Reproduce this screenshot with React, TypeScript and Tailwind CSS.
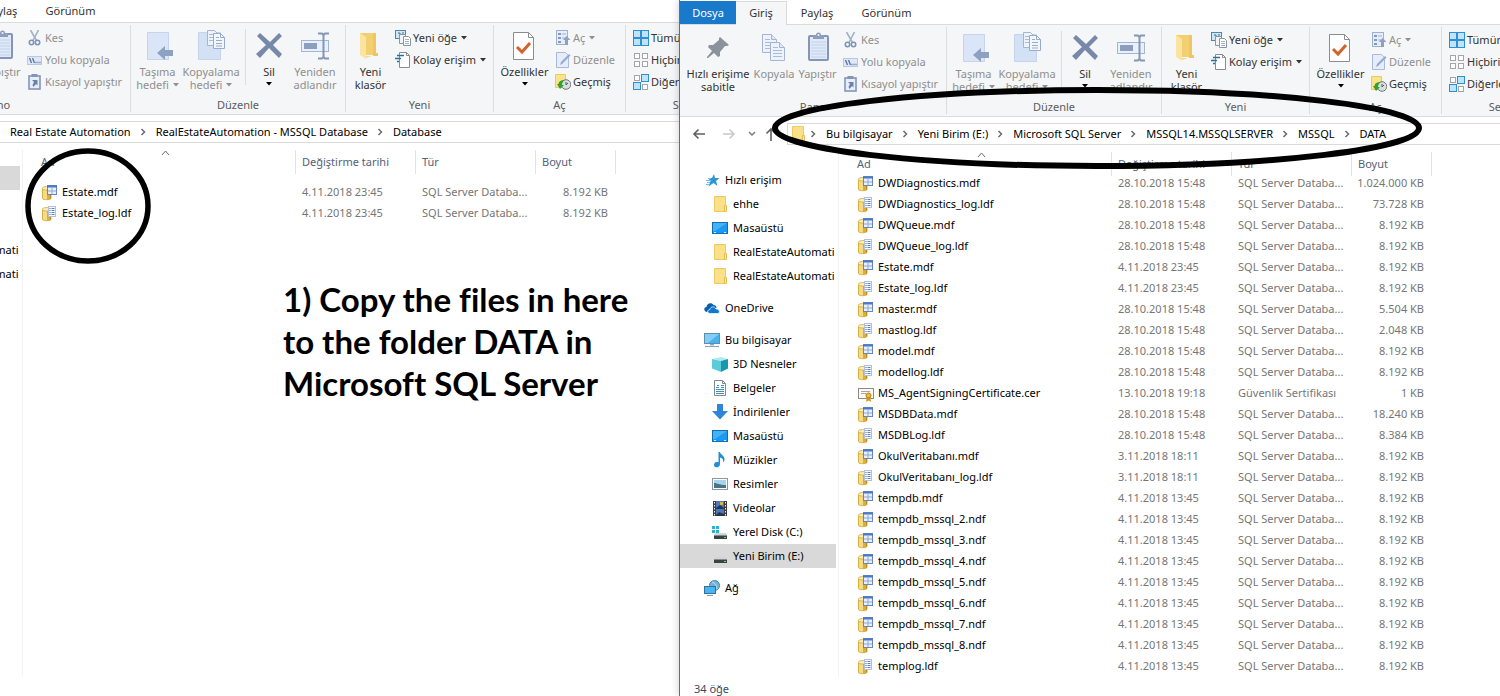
import React from "react";

type IconProps = { className?: string };

/* ---------- ribbon icons, large ---------- */

const PinIcon = () => (
  <svg width="32" height="32" viewBox="0 0 32 32">
    <path d="M18 6l9 8-2 1-2 0-5 6 0 4-2 1-4-4-6 5-1 0 0-1 5-6-4-4 1-2 4 0 6-5 0-2z" fill="#8a939c" />
  </svg>
);

const Sheet = ({ x, y }: { x: number; y: number }) => (
  <g transform={`translate(${x} ${y})`}>
    <path d="M.5.5h9l5 5v13H.5z" fill="#edf3fc" stroke="#a3b5d3" />
    <path d="M9.500.5v5h5" fill="#dbe6f6" stroke="#a3b5d3" />
    <path d="M3 5.500h5M3 8.500h9M3 11.500h9M3 14.500h9" stroke="#a9badb" />
  </g>
);

const CopyIcon = () => (
  <svg width="32" height="32" viewBox="0 0 32 32">
    <Sheet x={4} y={3} />
    <Sheet x={12} y={11} />
  </svg>
);

const PasteIcon = () => (
  <svg width="32" height="32" viewBox="0 0 32 32">
    <rect x="7" y="5" width="19" height="24" rx="1" fill="#dfe9f8" stroke="#8495b8" strokeWidth="2" />
    <path d="M9 11h15M9 14h15M9 17h15M9 20h15M9 23h15M9 26h15" stroke="#c3d1ea" />
    <path d="M11 4h3a2.500 2.500 0 0 1 5 0h3v4H11z" fill="#8c9dbd" />
    <circle cx="16.500" cy="4" r="1" fill="#f5f6f7" />
  </svg>
);

const MoveToIcon = () => (
  <svg width="32" height="32" viewBox="0 0 32 32">
    <path d="M5.500 3.500h21v27h-21z" fill="#dae6f7" stroke="#c5d4ec" />
    <path d="M15 24l8-7v4h8v6h-8v4z" fill="#8fa1c0" />
  </svg>
);

const CopyToIcon = () => (
  <svg width="32" height="32" viewBox="0 0 32 32">
    <path d="M3.500 3.500h22v27h-22z" fill="#d3e1f5" stroke="#c5d4ec" />
    <path d="M12.500 1.500h7l3 3v12h-10z" fill="#edf3fc" stroke="#a3b5d3" />
    <path d="M14 5.500h5M14 8.500h4M14 11.500h4" stroke="#a9badb" />
    <path d="M18.500 4.500h7l4 4v11h-11z" fill="#f2f6fd" stroke="#98abcd" />
    <path d="M25.500 4.500v4h4M21 8.500h3M21 11.500h6M21 14.500h6M21 17h6" fill="none" stroke="#98abcd" />
  </svg>
);

const DeleteIcon = () => (
  <svg width="32" height="32" viewBox="0 0 32 32">
    <path d="M4 7l3-3 10 9 9-9 3 3-9 9 9 9-3 4-10-10-9 10-4-4 10-9z" fill="#7788aa" />
  </svg>
);

const RenameIcon = () => (
  <svg width="32" height="32" viewBox="0 0 32 32">
    <rect x="2.500" y="11.500" width="27" height="11" fill="#e8f0fb" stroke="#a3b5d3" />
    <rect x="5" y="14" width="13" height="6" fill="#8c9dbd" />
    <path d="M19 4.500h4l1.500 1.500 1.500-1.500h4M24.500 6v22M19 29.500h4l1.500-1.500 1.500 1.500h4" fill="none" stroke="#8495b8" strokeWidth="2" />
  </svg>
);

const NewFolderIcon = () => (
  <svg width="32" height="32" viewBox="0 0 32 32">
    <path d="M5 4h16v22H5z" fill="#f3cf70" />
    <path d="M18 4h3v20h2v3h-5z" fill="#f0c661" />
    <path d="M5 4l6 4v22l-6-4z" fill="#fbe3a0" />
    <path d="M11 29l6-2h-6z" fill="#f7d98a" />
  </svg>
);

const PropertiesIcon = () => (
  <svg width="32" height="32" viewBox="0 0 32 32">
    <path d="M4.500 3.500h15l5 5v22h-20z" fill="#fff" stroke="#8c8c8c" />
    <path d="M19.500 3.500v5h5" fill="none" stroke="#8c8c8c" />
    <path d="M8 18l5 5 8-9" fill="none" stroke="#d4622b" strokeWidth="3" />
  </svg>
);

/* ---------- ribbon icons, small ---------- */

const CutIcon = () => (
  <svg width="16" height="16" viewBox="0 0 16 16">
    <path d="M3.500 0l6 10.500M11.500 0L6 10.500" stroke="#a3b0c6" strokeWidth="1.600" />
    <circle cx="4.500" cy="12.500" r="2.200" fill="none" stroke="#7e93bb" strokeWidth="1.600" />
    <circle cx="10.500" cy="12.500" r="2.200" fill="none" stroke="#7e93bb" strokeWidth="1.600" />
  </svg>
);

const PathIcon = () => (
  <svg width="16" height="16" viewBox="0 0 16 16">
    <rect x=".5" y="4.500" width="14" height="8" fill="#dde8f8" stroke="#b9c9e4" />
    <path d="M2.500 6l2 5M5.500 6l2 5M8.500 10.500h1M10.500 10.500h1M12.500 10.500h1" stroke="#5c719c" strokeWidth="1.300" />
  </svg>
);

const PasteShortcutIcon = () => (
  <svg width="16" height="16" viewBox="0 0 16 16">
    <rect x="2" y="2" width="11" height="13" fill="#e6eefa" stroke="#8495b8" strokeWidth="1.600" />
    <path d="M4.500 0h6v3h-6z" fill="#8495b8" />
    <path d="M5 6h5.500v5.500L9 10l-2.500 3-1-2L7 8z" fill="#6c80aa" />
  </svg>
);

const NewItemIcon = () => (
  <svg width="16" height="16" viewBox="0 0 16 16">
    <rect x=".5" y=".5" width="10" height="8" fill="#cfe6f3" stroke="#4c88a8" />
    <path d="M3 3h2v2M7 3h2" stroke="#3b7594" fill="none" />
    <path d="M4.500 4.500h6v9h-6z" fill="#eef4f8" stroke="#8b969e" />
    <path d="M8.500 6.500h5l2 2v7h-7z" fill="#fff" stroke="#8b969e" />
    <path d="M10 9.500h4M10 11.500h4M10 13.500h4" stroke="#9fb5c4" />
  </svg>
);

const EasyAccessIcon = () => (
  <svg width="16" height="16" viewBox="0 0 16 16">
    <path d="M4.500.5h7l3 3v12h-10z" fill="#fff" stroke="#8b8b8b" />
    <path d="M11.500.5v3h3" fill="none" stroke="#8b8b8b" />
    <path d="M2 3.500h7M0 6.500h6M2 9.500h2" stroke="#2f6f9c" strokeWidth="1.500" />
  </svg>
);

const OpenIcon = () => (
  <svg width="16" height="16" viewBox="0 0 16 16">
    <rect x="1.500" y=".5" width="11" height="14" fill="#e4edf9" stroke="#9fb1d1" />
    <path d="M3 3h3v2H3zM3 7h3v2H3zM3 11h3v2H3z" fill="#8598bd" />
    <path d="M7 4h4M7 8h3" stroke="#9fb1d1" />
    <path d="M11.500 6l4 4h-2.500v5h-3v-5H8z" fill="#8fa1c0" />
  </svg>
);

const EditIcon = () => (
  <svg width="16" height="16" viewBox="0 0 16 16">
    <path d="M1.500.5h9l3 3v12h-12z" fill="#e4edf9" stroke="#a9badb" />
    <path d="M5 13l1-3 8-8 1.500 1.500-8 8z" fill="#93a9cf" />
  </svg>
);

const HistoryIcon = () => (
  <svg width="16" height="16" viewBox="0 0 16 16">
    <path d="M.5.5h10v13H.5z" fill="#fbe38c" stroke="#ecca5d" />
    <circle cx="11" cy="10.500" r="4.800" fill="#d9dfe0" stroke="#6f797b" />
    <path d="M11 8v3l2-2" fill="none" stroke="#555" />
    <path d="M2 10l3 5 4-4H7c0-2 1-4 3-5-4 0-6 1-6.500 4z" fill="#35a02c" />
  </svg>
);

const Tile = ({ x, y, on }: { x: number; y: number; on: boolean }) => (
  <rect x={x + 0.5} y={y + 0.5} width={on ? 7 : 5} height={on ? 7 : 5} fill={on ? "#bfe3fb" : "#fff"} stroke={on ? "#2f8fd0" : "#a5a5a5"} />
);

const SelectAllIcon = () => (
  <svg width="16" height="16" viewBox="0 0 16 16">
    <Tile x={0} y={0} on />
    <Tile x={8} y={0} on />
    <Tile x={0} y={8} on />
    <Tile x={8} y={8} on />
  </svg>
);

const SelectNoneIcon = () => (
  <svg width="16" height="16" viewBox="0 0 16 16">
    <Tile x={1} y={1} on={false} />
    <Tile x={9} y={1} on={false} />
    <Tile x={1} y={9} on={false} />
    <Tile x={9} y={9} on={false} />
  </svg>
);

const InvertIcon = () => (
  <svg width="16" height="16" viewBox="0 0 16 16">
    <Tile x={1} y={1} on={false} />
    <Tile x={8} y={0} on />
    <Tile x={0} y={8} on />
    <Tile x={9} y={10} on={false} />
  </svg>
);

/* ---------- file and tree icons ---------- */

const Drum = () => (
  <>
    <path d="M0 3.500v9.500c0 3 9.500 3 9.500 0V3.500z" fill="#d9ae3c" />
    <path d="M1 4v9.500c1 .8 3 1 4 1V4z" fill="#f4dc86" />
    <path d="M8.500 4v9.500" stroke="#b98a22" />
    <ellipse cx="4.800" cy="3.300" rx="4.500" ry="1.800" fill="#fbf0bd" stroke="#cfa846" strokeWidth=".8" />
  </>
);

const DataFileIcon = () => (
  <svg width="16" height="16" viewBox="0 0 16 16">
    <Drum />
    <rect x="5.500" y=".5" width="9" height="9" fill="#e9f0fb" stroke="#6a86b8" />
    <path d="M5 1.500h10" stroke="#4a78c8" strokeWidth="2" />
    <path d="M10 3v6M6 6h8" stroke="#8fa8d2" />
  </svg>
);

const LogFileIcon = () => (
  <svg width="16" height="16" viewBox="0 0 16 16">
    <Drum />
    <rect x="6.500" y=".5" width="7" height="10" fill="#f7f9fd" stroke="#b3c0d8" />
    <path d="M7.500 2.500h1M7.500 4.500h1M7.500 6.500h1M7.500 8.500h1" stroke="#46639c" />
    <path d="M9.500 2.500h3M9.500 4.500h3M9.500 6.500h3M9.500 8.500h3" stroke="#5c84c4" />
  </svg>
);

const CertificateIcon = () => (
  <svg width="16" height="16" viewBox="0 0 16 16">
    <rect x=".5" y="2.500" width="15" height="10" fill="#fbfaf5" stroke="#8f8b84" />
    <path d="M3 5.500h9M3 7.500h5" stroke="#a8a8a8" />
    <path d="M9 10l-1 6 2.500-1.500L13 16l-1-6z" fill="#d59a1f" />
    <circle cx="10.500" cy="9.500" r="2.500" fill="#f0b93a" stroke="#b67d12" />
  </svg>
);

const FolderIcon = () => (
  <svg width="16" height="16" viewBox="0 0 16 16">
    <path d="M2.500.5h11v15h-11z" fill="#fbe08a" stroke="#efcb66" />
    <path d="M12.500 9.500h2v6h-2z" fill="#fbe6a2" stroke="#e6bf54" />
  </svg>
);

const DesktopIcon = () => (
  <svg width="16" height="16" viewBox="0 0 16 16">
    <rect x=".5" y="2.500" width="15" height="11" fill="#1b9bf0" stroke="#0f6cb5" />
    <path d="M1 3h14L3 11H1z" fill="#43b2f8" />
    <path d="M2 12.500h2M12 12.500h2" stroke="#d9efff" />
  </svg>
);

const StarIcon = () => (
  <svg width="16" height="16" viewBox="0 0 16 16">
    <path d="M10 2l1 4h4.500L12 9l1.500 5L9.500 11l-5 3.500L6.500 9 4 6h4z" fill="#2f95d6" />
    <path d="M2 8.500h5M3 10.500h3M2 12.500h3M4 6.500h3" stroke="#6fc1ee" />
  </svg>
);

const CloudIcon = () => (
  <svg width="16" height="16" viewBox="0 0 16 16">
    <path d="M2.500 12C-.5 11-.5 7.500 2.500 7c0-4 5.500-5 7-2 2 0 3 1 3 3z" fill="#0a5fb0" />
    <path d="M6 13.500c-3 0-3-4 0-4 .5-3.500 5-3.500 6-.5 3-.5 5 3.500 2 4.500z" fill="#1278cf" stroke="#fff" strokeWidth=".7" />
  </svg>
);

const ComputerIcon = () => (
  <svg width="16" height="16" viewBox="0 0 16 16">
    <rect x=".5" y="1.500" width="15" height="10" fill="#4db1ec" stroke="#5e8fae" />
    <path d="M1 2h14L4 11H1z" fill="#83cdf6" />
    <path d="M6 12h4v1.500H6z" fill="#8ba9bb" />
    <path d="M1 14.500h14" stroke="#86a5b8" />
  </svg>
);

const CubeIcon = () => (
  <svg width="16" height="16" viewBox="0 0 16 16">
    <path d="M0 3l9-2 7 2-7 2z" fill="#aeeaf0" />
    <path d="M0 3l9 2v11l-9-3.500z" fill="#5ccbd8" />
    <path d="M9 5l7-2v9.500L9 16z" fill="#1798ad" />
  </svg>
);

const DocumentIcon = () => (
  <svg width="16" height="16" viewBox="0 0 16 16">
    <path d="M2.500.5h8l3 3v12h-11z" fill="#fff" stroke="#7d8a92" />
    <path d="M10.500.5v3h3" fill="none" stroke="#7d8a92" />
    <path d="M5 5.500h2M9 5.500h3M4 7.500h3M9 7.500h3M4 9.500h8M4 11.500h8M4 13.500h8" stroke="#3e8dc4" />
  </svg>
);

const DownloadIcon = () => (
  <svg width="16" height="16" viewBox="0 0 16 16">
    <path d="M5 0h6v7h5l-8 8.500L0 7h5z" fill="#2f86d6" />
  </svg>
);

const MusicIcon = () => (
  <svg width="16" height="16" viewBox="0 0 16 16">
    <path d="M6.500 0H8c.5 3 5 3.500 4.500 8-.3 1.500-1 2-1.500 2 .5-3-1-4-3-4.500V12c0 4-6 4.500-6 1 0-2.500 2.500-3.500 4.500-2.500z" fill="#1e90d8" />
  </svg>
);

const PictureIcon = () => (
  <svg width="16" height="16" viewBox="0 0 16 16">
    <rect x=".5" y="2.500" width="15" height="11" fill="#fff" stroke="#8d979e" />
    <path d="M2 4h12v8H2z" fill="#a9d4ee" />
    <path d="M2 7c3 0 5 2 12 2v3H2z" fill="#4b7386" />
  </svg>
);

const VideoIcon = () => (
  <svg width="16" height="16" viewBox="0 0 16 16">
    <path d="M1 1h14v15H1z" fill="#3b3b3b" />
    <path d="M4 1h8v15H4z" fill="#4d78bd" />
    <path d="M4 8l4-3 4 3v1H4zM4 15l3-3 5 2v2H4z" fill="#26364f" />
    <path d="M8 2h3v3H8z" fill="#d8b740" />
    <path d="M2.500 2v14M13.500 2v14" stroke="#eee" strokeDasharray="1.500 1.500" />
  </svg>
);

const DriveBody = () => (
  <>
    <path d="M3 9h11l1 3H2z" fill="#d3d6d8" />
    <path d="M2 11.500h13v3.500H2z" fill="#3c4144" />
    <path d="M12 13.500h2" stroke="#5be05b" />
  </>
);

const SystemDriveIcon = () => (
  <svg width="16" height="16" viewBox="0 0 16 16">
    <DriveBody />
    <path d="M0 2h3v3H0zM4 2h3v3H4zM0 6h3v3H0zM4 6h3v3H4z" fill="#27b3d6" />
  </svg>
);

const DriveIcon = () => (
  <svg width="16" height="16" viewBox="0 0 16 16">
    <DriveBody />
  </svg>
);

const NetworkIcon = () => (
  <svg width="16" height="16" viewBox="0 0 16 16">
    <circle cx="10.500" cy="5.500" r="5" fill="#6fb4d8" stroke="#4587ae" />
    <path d="M8 2c3 1 5 3 5 7" stroke="#c4e4f3" fill="none" />
    <rect x=".5" y="6.500" width="11" height="7" fill="#49b4f2" stroke="#2f719c" />
    <path d="M3 15.500h6" stroke="#7d99aa" />
  </svg>
);

const Caret = ({ className = "" }: IconProps) => (
  <svg width="6" height="4" viewBox="0 0 6 4" className={className}>
    <path d="M0 0h6L3 3.500z" fill="currentColor" />
  </svg>
);

const Chevron = () => (
  <svg width="25" height="8" viewBox="0 0 25 8" className="shrink-0 text-[#6b6b6b]">
    <path d="M10.500 1l3 3-3 3" fill="none" stroke="currentColor" strokeWidth="1.500" />
  </svg>
);

/* ---------- ribbon ---------- */

type BigProps = { icon: React.ReactNode; lines: string[]; width: string; muted?: boolean; caret?: "inline" | "below" };

function BigButton({ icon, lines, width, muted, caret }: BigProps) {
  return (
    <button type="button" className={`flex shrink-0 flex-col items-center whitespace-nowrap leading-[13px] ${width} ${muted ? "text-[#8f8f8f]" : "text-[#333]"}`}>
      <span className="mb-1 block h-8">{icon}</span>
      {lines.map((line, i) => (
        <span key={line} className="flex items-center gap-1">
          {line}
          {caret === "inline" && i === lines.length - 1 && <Caret />}
        </span>
      ))}
      {caret === "below" && <Caret className="mt-1 text-black" />}
    </button>
  );
}

type SmallProps = { icon: React.ReactNode; label: string; muted?: boolean; caret?: boolean };

function SmallButton({ icon, label, muted, caret }: SmallProps) {
  return (
    <button type="button" className={`flex h-[22px] items-center gap-[2px] whitespace-nowrap ${muted ? "text-[#8f8f8f]" : "text-[#333]"}`}>
      {icon}
      {label}
      {caret && <Caret className="ml-[2px]" />}
    </button>
  );
}

function Group({ label, width, children }: { label: string; width: string; children: React.ReactNode }) {
  return (
    <section aria-label={label} className={`flex shrink-0 flex-col border-r border-[#dcdddf] ${width}`}>
      <div className="flex flex-1 pt-[2px]">{children}</div>
      <div className="h-[15px] text-center leading-[15px] text-[#5c5c5c]">{label}</div>
    </section>
  );
}

function Ribbon() {
  return (
    <div className="flex h-[93px] border-y border-[#dadbdc] bg-[#f5f6f7] py-[2px]">
      <Group label="Pano" width="w-[267px]">
        <div className="flex pl-1 pt-[2px]">
          <BigButton width="w-[68px]" icon={<PinIcon />} lines={["Hızlı erişime", "sabitle"]} />
          <BigButton width="w-[44px]" icon={<CopyIcon />} lines={["Kopyala"]} muted />
          <BigButton width="w-[43px]" icon={<PasteIcon />} lines={["Yapıştır"]} muted />
        </div>
        <div className="ml-1">
          <SmallButton icon={<CutIcon />} label="Kes" muted />
          <SmallButton icon={<PathIcon />} label="Yolu kopyala" muted />
          <SmallButton icon={<PasteShortcutIcon />} label="Kısayol yapıştır" muted />
        </div>
      </Group>
      <Group label="Düzenle" width="w-[215px]">
        <div className="flex pt-[2px]">
          <BigButton width="w-[53px]" icon={<MoveToIcon />} lines={["Taşıma", "hedefi"]} muted caret="inline" />
          <BigButton width="w-[54px]" icon={<CopyToIcon />} lines={["Kopyalama", "hedefi"]} muted caret="inline" />
          <div className="ml-[7px] h-[56px] border-l border-[#dcdddf]" />
          <BigButton width="w-[46px]" icon={<DeleteIcon />} lines={["Sil"]} caret="below" />
          <BigButton width="w-[46px]" icon={<RenameIcon />} lines={["Yeniden", "adlandır"]} muted />
        </div>
      </Group>
      <Group label="Yeni" width="w-[148px]">
        <div className="pt-[2px]">
          <BigButton width="w-[49px]" icon={<NewFolderIcon />} lines={["Yeni", "klasör"]} />
        </div>
        <div>
          <SmallButton icon={<NewItemIcon />} label="Yeni öğe" caret />
          <SmallButton icon={<EasyAccessIcon />} label="Kolay erişim" caret />
        </div>
      </Group>
      <Group label="Aç" width="w-[132px]">
        <div className="pt-[2px]">
          <BigButton width="w-[61px]" icon={<PropertiesIcon />} lines={["Özellikler"]} caret="below" />
        </div>
        <div>
          <SmallButton icon={<OpenIcon />} label="Aç" muted caret />
          <SmallButton icon={<EditIcon />} label="Düzenle" muted />
          <SmallButton icon={<HistoryIcon />} label="Geçmiş" />
        </div>
      </Group>
      <Group label="Seç" width="w-[112px]">
        <div className="pl-[7px]">
          <SmallButton icon={<SelectAllIcon />} label="Tümünü seç" />
          <SmallButton icon={<SelectNoneIcon />} label="Hiçbirini seçme" />
          <SmallButton icon={<InvertIcon />} label="Diğerlerini seç" />
        </div>
      </Group>
    </div>
  );
}

function Tabs() {
  return (
    <nav className="flex h-6 pt-px text-[#333]">
      <button type="button" className="w-[56px] bg-[#1979ca] pt-px text-white">Dosya</button>
      <button type="button" className="relative -mb-px w-[51px] border-r border-t border-[#dadbdc] bg-[#f5f6f7]">Giriş</button>
      <button type="button" className="w-[60px] pt-px">Paylaş</button>
      <button type="button" className="w-[79px] pt-px">Görünüm</button>
    </nav>
  );
}

/* ---------- address bar ---------- */

function AddressBar({ path }: { path: string[] }) {
  return (
    <div className="flex h-[34px] items-center">
      <div className="flex w-[107px] shrink-0 items-center pl-3 text-[#6a6a6a]">
        <button type="button" aria-label="Geri">
          <svg width="14" height="14" viewBox="0 0 14 14"><path d="M13 7H2M6.500 2.500L2 7l4.500 4.500" fill="none" stroke="#5f5f5f" strokeWidth="1.600" /></svg>
        </button>
        <button type="button" aria-label="İleri" className="ml-4">
          <svg width="14" height="14" viewBox="0 0 14 14"><path d="M1 7h11M7.500 2.500L12 7l-4.500 4.500" fill="none" stroke="#c9c9c9" strokeWidth="1.500" /></svg>
        </button>
        <button type="button" aria-label="Son konumlar" className="ml-3">
          <svg width="8" height="8" viewBox="0 0 8 8"><path d="M1 2l3 3 3-3" fill="none" stroke="#7a7a7a" strokeWidth="1.500" /></svg>
        </button>
        <button type="button" aria-label="Yukarı" className="ml-2">
          <svg width="14" height="14" viewBox="0 0 14 14"><path d="M7 14V2M2.500 6.500L7 2l4.500 4.500" fill="none" stroke="#5f5f5f" strokeWidth="1.600" /></svg>
        </button>
      </div>
      <div className="flex h-[22px] flex-1 items-center whitespace-nowrap border-y border-l border-[#d9d9d9] pl-[2px] text-black">
        <span className="mr-[-5px] shrink-0"><FolderIcon /></span>
        {path.map((part) => (
          <React.Fragment key={part}>
            <Chevron />
            <a href="#" className="shrink-0">{part}</a>
          </React.Fragment>
        ))}
      </div>
    </div>
  );
}

/* ---------- navigation tree ---------- */

type Node = { label: string; icon: React.ReactNode; child?: boolean };

const tree: Node[][] = [
  [
    { label: "Hızlı erişim", icon: <StarIcon /> },
    { label: "ehhe", icon: <FolderIcon />, child: true },
    { label: "Masaüstü", icon: <DesktopIcon />, child: true },
    { label: "RealEstateAutomati", icon: <FolderIcon />, child: true },
    { label: "RealEstateAutomati", icon: <FolderIcon />, child: true },
  ],
  [{ label: "OneDrive", icon: <CloudIcon /> }],
  [
    { label: "Bu bilgisayar", icon: <ComputerIcon /> },
    { label: "3D Nesneler", icon: <CubeIcon />, child: true },
    { label: "Belgeler", icon: <DocumentIcon />, child: true },
    { label: "İndirilenler", icon: <DownloadIcon />, child: true },
    { label: "Masaüstü", icon: <DesktopIcon />, child: true },
    { label: "Müzikler", icon: <MusicIcon />, child: true },
    { label: "Resimler", icon: <PictureIcon />, child: true },
    { label: "Videolar", icon: <VideoIcon />, child: true },
    { label: "Yerel Disk (C:)", icon: <SystemDriveIcon />, child: true },
    { label: "Yeni Birim (E:)", icon: <DriveIcon />, child: true },
  ],
  [{ label: "Ağ", icon: <NetworkIcon /> }],
];

function Tree({ selected }: { selected: string }) {
  return (
    <nav className="flex w-[156px] shrink-0 flex-col gap-2 overflow-hidden pt-[17px] text-black">
      {tree.map((nodes, g) => (
        <ul key={g}>
          {nodes.map((n, i) => (
            <li key={i}>
              <a
                href="#"
                className={`flex h-6 items-center gap-[5px] whitespace-nowrap ${n.child ? "pl-8" : "pl-6"} ${n.label === selected ? "bg-[#d9d9d9]" : ""}`}
              >
                <span className="shrink-0">{n.icon}</span>
                {n.label}
              </a>
            </li>
          ))}
        </ul>
      ))}
    </nav>
  );
}

/* ---------- file list ---------- */

type FileRow = [name: string, date: string, size: string, type?: string];

function fileIcon(name: string) {
  if (name.endsWith(".cer")) return <CertificateIcon />;
  return name.endsWith(".ldf") ? <LogFileIcon /> : <DataFileIcon />;
}

function Header({ children }: { children: React.ReactNode }) {
  return (
    <th scope="col" className="p-0 align-top font-normal">
      <div className="flex h-[21px] items-start">
        <span className="flex h-6 shrink-0 grow items-center border-r border-[#e3e3e3] pl-[6px] text-[#55617a]">{children}</span>
      </div>
    </th>
  );
}

function FileTable({ rows, spaced }: { rows: FileRow[]; spaced?: boolean }) {
  return (
    <table className="w-[593px] table-fixed border-collapse whitespace-nowrap text-left text-[#767676]">
      <colgroup>
        <col className="w-[273px]" />
        <col className="w-[120px]" />
        <col className="w-[120px]" />
        <col className="w-[80px]" />
      </colgroup>
      <thead>
        <tr>
          <th scope="col" className={`p-0 align-top font-normal ${spaced ? "h-8" : "h-[21px]"}`}>
            <div className="relative flex h-[21px] items-start">
              <span className="flex h-6 grow items-center border-r border-[#e3e3e3] pl-[18px] text-[#55617a]">Ad</span>
              <svg width="9" height="6" viewBox="0 0 9 6" className="absolute left-[138px] top-0">
                <path d="M1 5l3.500-4L8 5" fill="none" stroke="#6b6b6b" />
              </svg>
            </div>
          </th>
          <Header>Değiştirme tarihi</Header>
          <Header>Tür</Header>
          <Header>Boyut</Header>
        </tr>
      </thead>
      <tbody>
        {rows.map(([name, date, size, type = "SQL Server Databa..."]) => (
          <tr key={name} className="h-[21px]">
            <td className="p-0">
              <span className="flex h-[21px] items-center gap-1 pl-[19px] text-black">
                {fileIcon(name)}
                {name}
              </span>
            </td>
            <td className="p-0 pl-[6px]">{date}</td>
            <td className="p-0 pl-[6px]">{type}</td>
            <td className="p-0 pr-2 text-right">{size}</td>
          </tr>
        ))}
      </tbody>
    </table>
  );
}

/* ---------- window ---------- */

type WindowProps = { path: string[]; selected: string; rows: FileRow[]; spaced?: boolean; status?: string };

function ExplorerWindow({ path, selected, rows, spaced, status }: WindowProps) {
  return (
    <div className="flex grow flex-col">
      <Tabs />
      <Ribbon />
      <AddressBar path={path} />
      <div className="flex flex-1">
        <Tree selected={selected} />
        <main className="ml-[2px] min-w-0 flex-1 border-l border-[#f3f3f3] pt-px">
          <FileTable rows={rows} spaced={spaced} />
        </main>
      </div>
      {status && <footer className="h-[19px] pl-[14px] pt-1 leading-[15px] text-[#3c4a63]">{status}</footer>}
    </div>
  );
}

const sourceRows: FileRow[] = [
  ["Estate.mdf", "4.11.2018 23:45", "8.192 KB"],
  ["Estate_log.ldf", "4.11.2018 23:45", "8.192 KB"],
];

const dataRows: FileRow[] = [
  ["DWDiagnostics.mdf", "28.10.2018 15:48", "1.024.000 KB"],
  ["DWDiagnostics_log.ldf", "28.10.2018 15:48", "73.728 KB"],
  ["DWQueue.mdf", "28.10.2018 15:48", "8.192 KB"],
  ["DWQueue_log.ldf", "28.10.2018 15:48", "8.192 KB"],
  ["Estate.mdf", "4.11.2018 23:45", "8.192 KB"],
  ["Estate_log.ldf", "4.11.2018 23:45", "8.192 KB"],
  ["master.mdf", "28.10.2018 15:48", "5.504 KB"],
  ["mastlog.ldf", "28.10.2018 15:48", "2.048 KB"],
  ["model.mdf", "28.10.2018 15:48", "8.192 KB"],
  ["modellog.ldf", "28.10.2018 15:48", "8.192 KB"],
  ["MS_AgentSigningCertificate.cer", "13.10.2018 19:18", "1 KB", "Güvenlik Sertifikası"],
  ["MSDBData.mdf", "28.10.2018 15:48", "18.240 KB"],
  ["MSDBLog.ldf", "28.10.2018 15:48", "8.384 KB"],
  ["OkulVeritabanı.mdf", "3.11.2018 18:11", "8.192 KB"],
  ["OkulVeritabanı_log.ldf", "3.11.2018 18:11", "8.192 KB"],
  ["tempdb.mdf", "4.11.2018 13:45", "8.192 KB"],
  ["tempdb_mssql_2.ndf", "4.11.2018 13:45", "8.192 KB"],
  ["tempdb_mssql_3.ndf", "4.11.2018 13:45", "8.192 KB"],
  ["tempdb_mssql_4.ndf", "4.11.2018 13:45", "8.192 KB"],
  ["tempdb_mssql_5.ndf", "4.11.2018 13:45", "8.192 KB"],
  ["tempdb_mssql_6.ndf", "4.11.2018 13:45", "8.192 KB"],
  ["tempdb_mssql_7.ndf", "4.11.2018 13:45", "8.192 KB"],
  ["tempdb_mssql_8.ndf", "4.11.2018 13:45", "8.192 KB"],
  ["templog.ldf", "4.11.2018 13:45", "8.192 KB"],
];

export default function App() {
  return (
    <div className="grid min-h-screen grid-cols-[minmax(0,679fr)_minmax(0,821fr)] overflow-hidden bg-white font-['Noto_Sans','Open_Sans',sans-serif] text-[11px]">
      <div className="relative flex overflow-hidden">
        <div className="-ml-[136px] -mt-[2px] mb-5 flex min-w-0 grow">
          <ExplorerWindow
            path={["Real Estate Automation", "RealEstateAutomation - MSSQL Database", "Database"]}
            selected="Hızlı erişim"
            rows={sourceRows}
            spaced
          />
        </div>
        <svg width="126" height="116" viewBox="0 0 126 116" className="absolute left-[25px] top-[148px]">
          <ellipse cx="63" cy="58" rx="60" ry="55" fill="none" stroke="#000" strokeWidth="5.500" />
        </svg>
        <p className="absolute left-[283px] top-[278px] whitespace-nowrap font-[Lato,sans-serif] text-[33px] font-bold leading-[42px] text-black [font-variant-ligatures:none]">
          1) Copy the files in here
          <br />
          to the folder DATA in
          <br />
          Microsoft SQL Server
        </p>
      </div>
      <div className="relative flex min-w-0 shadow-[0_0_8px_rgba(0,0,0,0.2)]">
        <div className="w-px shrink-0 bg-[#e0393e]" />
        <div className="flex min-w-0 grow overflow-hidden bg-white">
          <ExplorerWindow
            path={["Bu bilgisayar", "Yeni Birim (E:)", "Microsoft SQL Server", "MSSQL14.MSSQLSERVER", "MSSQL", "DATA"]}
            selected="Yeni Birim (E:)"
            rows={dataRows}
            status="34 öğe"
          />
        </div>
        <svg width="652" height="82" viewBox="0 0 652 82" className="absolute left-[92px] top-[87px]">
          <ellipse cx="326" cy="41" rx="322" ry="38" fill="none" stroke="#000" strokeWidth="6" />
        </svg>
      </div>
    </div>
  );
}
